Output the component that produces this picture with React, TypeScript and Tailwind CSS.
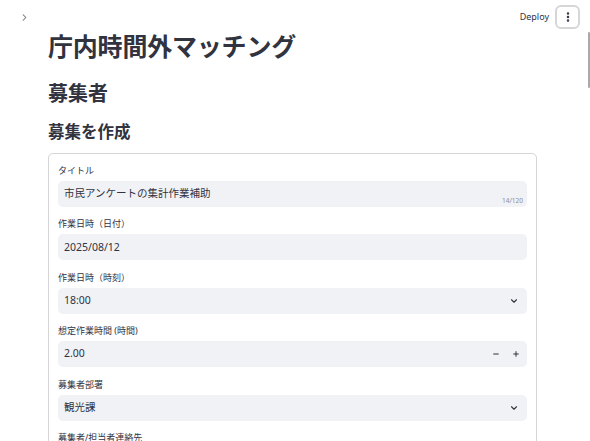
import React from 'react';
import { ChevronRight, ChevronDown, EllipsisVertical, Minus, Plus } from 'lucide-react';

const FONT = { fontFamily: '"Noto Sans", "Noto Sans CJK JP", sans-serif' };

function Label({ children }: { children: React.ReactNode }) {
  return <div className="h-[13px] leading-[14px] text-[9px] text-[#31333f] mb-[4px]">{children}</div>;
}

function Field({ label, children }: { label: string; children: React.ReactNode }) {
  return (
    <div className="flex flex-col">
      <Label>{label}</Label>
      {children}
    </div>
  );
}

function Box({ children, right }: { children: React.ReactNode; right?: React.ReactNode }) {
  return (
    <div className="relative h-[26px] rounded-[5px] bg-[#f0f2f6] flex items-center pl-[6px] pr-[8px]">
      <span className="flex-1 text-[10.5px] text-[#31333f]">{children}</span>
      {right}
    </div>
  );
}

export default function App() {
  return (
    <div style={FONT} className="relative w-full h-[441px] overflow-hidden bg-white text-[#31333f]">
      {/* Header */}
      <div className="h-[34px] flex items-center justify-between pl-[19px] pr-[10px]">
        <ChevronRight size={11} strokeWidth={2.2} className="text-[#6b6f7b]" />
        <div className="flex items-center gap-[6px]">
          <span className="text-[9px] text-[#31333f]">Deploy</span>
          <button className="w-[25px] h-[24px] rounded-[6px] border-2 border-[#d6d6d9] flex items-center justify-center">
            <EllipsisVertical size={12} strokeWidth={3} className="text-[#31333f]" />
          </button>
        </div>
      </div>

      {/* Scrollbar */}
      <div className="absolute right-0 top-[32px] w-[2px] h-[56px] bg-[#a8a8ae] rounded-full" />

      {/* Main */}
      <div className="pl-[48px] pr-[53px]">
        <h1 className="text-[25px] leading-[25px] font-bold tracking-[-0.2px]">庁内時間外マッチング</h1>
        <h2 className="mt-[23px] text-[20px] leading-[24px] font-bold">募集者</h2>
        <h3 className="mt-[16px] text-[16.5px] leading-[20px] font-bold">募集を作成</h3>

        <div className="mt-[11px] border border-[#31333f]/20 rounded-[5px] px-[9px] pt-[10px] flex flex-col gap-[10.4px]">
          <Field label="タイトル">
            <Box
              right={
                <span className="absolute right-[4px] bottom-[1px] text-[6.5px] text-[#8c8e96]">14/120</span>
              }
            >
              市民アンケートの集計作業補助
            </Box>
          </Field>
          <Field label="作業日時（日付）">
            <Box>2025/08/12</Box>
          </Field>
          <Field label="作業日時（時刻）">
            <Box right={<ChevronDown size={10} strokeWidth={2.6} className="text-[#31333f]" />}>18:00</Box>
          </Field>
          <Field label="想定作業時間 (時間)">
            <Box
              right={
                <div className="flex items-center gap-[12px] mr-[-1px]">
                  <Minus size={8} strokeWidth={3} className="text-[#31333f]" />
                  <Plus size={8} strokeWidth={3} className="text-[#31333f]" />
                </div>
              }
            >
              2.00
            </Box>
          </Field>
          <Field label="募集者部署">
            <Box right={<ChevronDown size={10} strokeWidth={2.6} className="text-[#31333f]" />}>観光課</Box>
          </Field>
          <Field label="募集者/担当者連絡先">
            <Box>{''}</Box>
          </Field>
        </div>
      </div>
    </div>
  );
}
